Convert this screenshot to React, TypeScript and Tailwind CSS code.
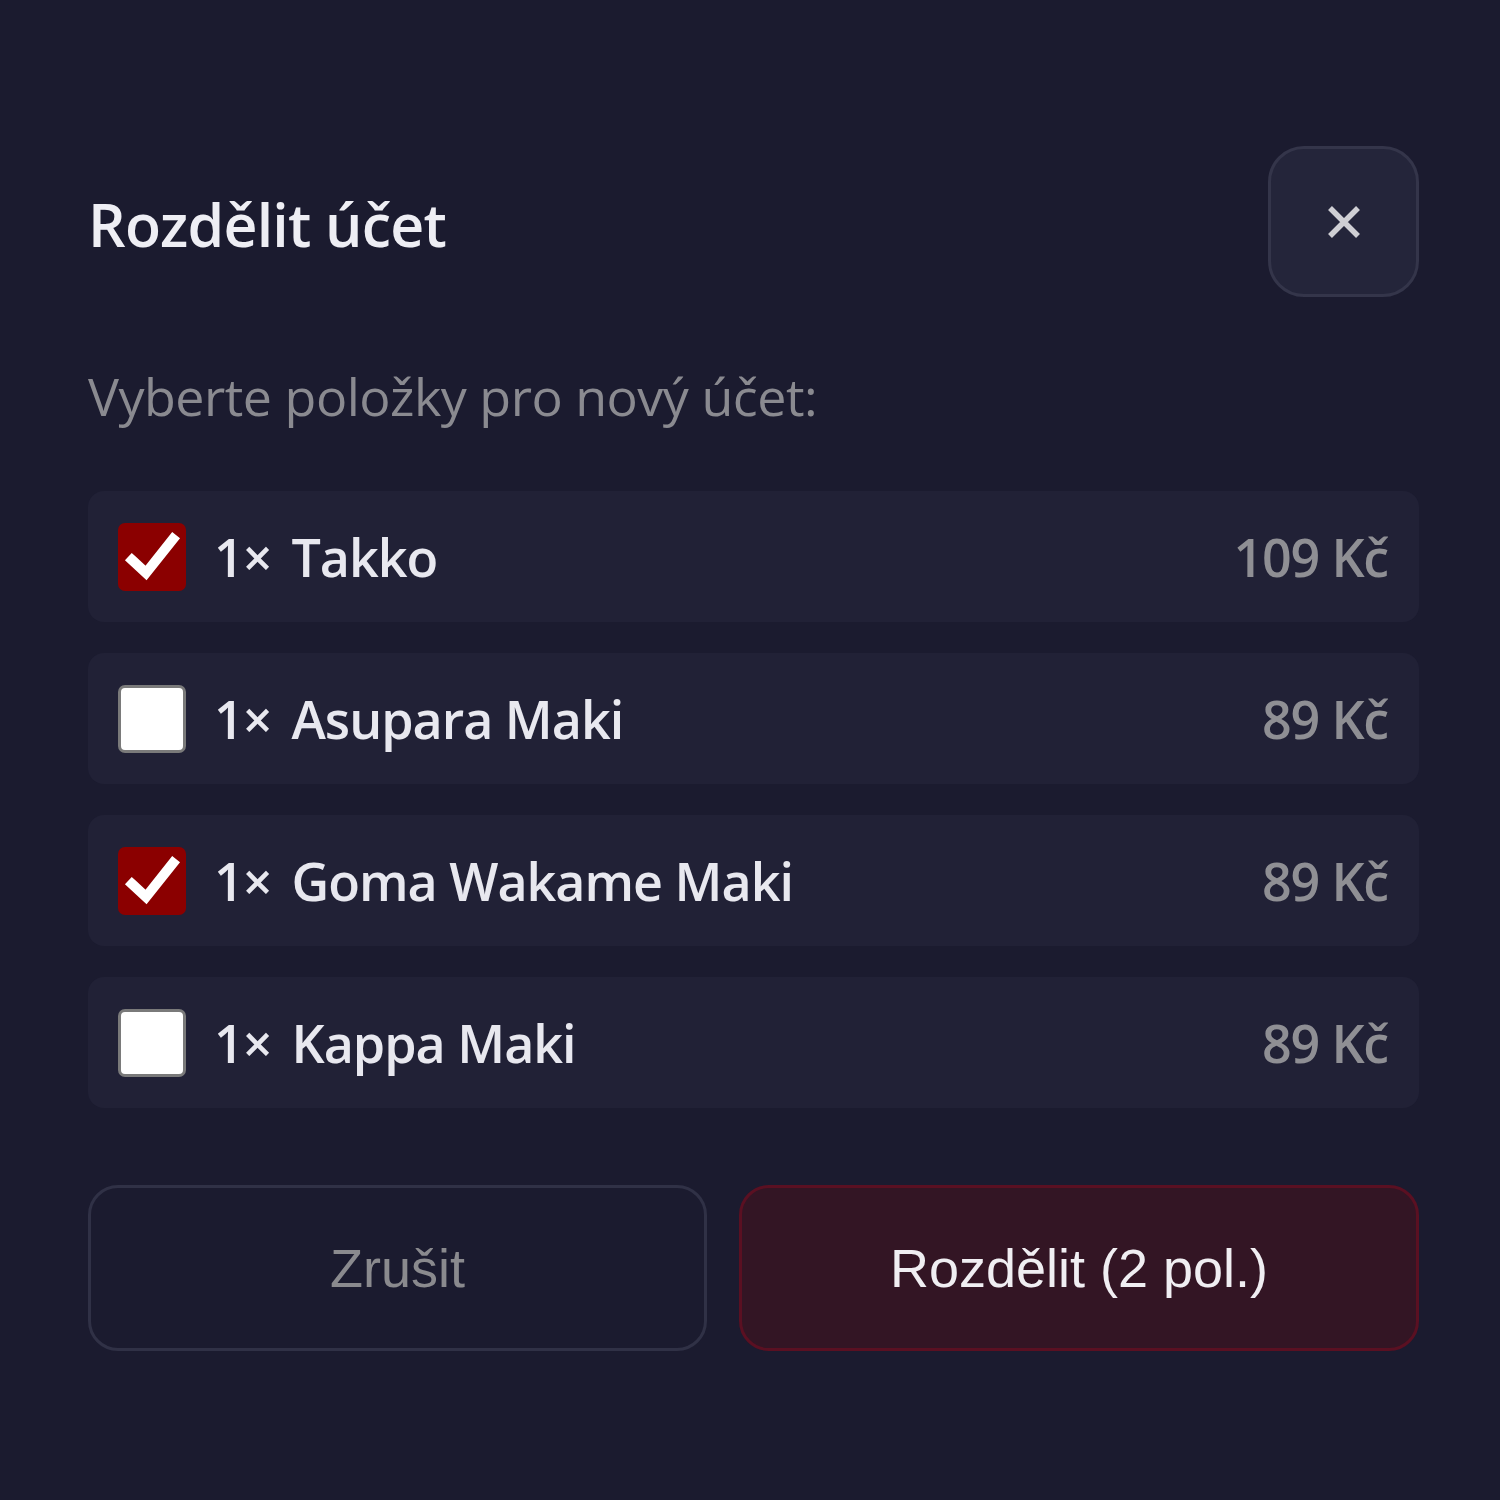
import { useState } from 'react';

type Polozka = { id: number; nazev: string; cena: number };

const polozky: Polozka[] = [
  { id: 1, nazev: 'Takko', cena: 109 },
  { id: 2, nazev: 'Asupara Maki', cena: 89 },
  { id: 3, nazev: 'Goma Wakame Maki', cena: 89 },
  { id: 4, nazev: 'Kappa Maki', cena: 89 },
];

function Checkbox({ checked }: { checked: boolean }) {
  if (checked) {
    return (
      <span className="flex h-[68px] w-[68px] shrink-0 items-center justify-center rounded-[7px] bg-[#8b0000]">
        <svg viewBox="0 0 68 68" className="h-[68px] w-[68px]" fill="none">
          <path d="M14 37 L28 50 L55 16" stroke="#ffffff" strokeWidth="10" strokeLinecap="square" strokeLinejoin="miter" />
        </svg>
      </span>
    );
  }
  return <span className="block h-[68px] w-[68px] shrink-0 rounded-[7px] border-[3px] border-[#7a7a7a] bg-white" />;
}

export default function App() {
  const [vybrane, setVybrane] = useState<number[]>([1, 3]);
  const toggle = (id: number) =>
    setVybrane((v) => (v.includes(id) ? v.filter((x) => x !== id) : [...v, id]));

  return (
    <div className="min-h-[1500px] w-[1500px] bg-[#1b1b2f] pl-[88px] pr-[81px] pt-[146px] font-['Open_Sans','Noto_Sans',sans-serif]">
      {/* Header */}
      <div className="flex items-center justify-between">
        <h2 className="mt-[6px] text-[59px] font-semibold leading-none text-[#eeeef4] tracking-[-0.8px]">Rozdělit účet</h2>
        <button className="flex h-[151px] w-[151px] items-center justify-center rounded-[36px] border-[3px] border-[#34354a] bg-[#24253a]">
          <svg viewBox="0 0 40 40" className="h-[40px] w-[40px]" fill="none">
            <path d="M6 6 L34 34 M34 6 L6 34" stroke="#cfcfd4" strokeWidth="5.5" />
          </svg>
        </button>
      </div>

      <p className="mt-[63px] text-[52px] leading-[72px] text-[#8a8a90] tracking-[-0.5px]">Vyberte položky pro nový účet:</p>

      {/* Položky */}
      <ul className="mt-[59px] flex flex-col gap-[31px]">
        {polozky.map((p) => {
          const checked = vybrane.includes(p.id);
          return (
            <li
              key={p.id}
              onClick={() => toggle(p.id)}
              className="flex h-[131px] cursor-pointer items-center rounded-[16px] bg-[#212136] pl-[30px] pr-[31px]"
            >
              <Checkbox checked={checked} />
              <span className="ml-[28px] flex-1 text-[52px] font-semibold leading-none text-[#e8e8ef] tracking-[-1px]">
                1×<span className="ml-[20px]">{p.nazev}</span>
              </span>
              <span className="text-[52px] font-semibold leading-none text-[#8f8f94] tracking-[-1.2px]">{p.cena} Kč</span>
            </li>
          );
        })}
      </ul>

      {/* Akce */}
      <div className="mt-[77px] grid grid-cols-[619px_1fr] gap-[32px]">
        <button className="h-[166px] rounded-[30px] border-[3px] border-[#303146] bg-transparent font-['Liberation_Sans',Arial,sans-serif] text-[54px] text-[#8a8a8e]">
          Zrušit
        </button>
        <button className="h-[166px] rounded-[30px] border-[3px] border-[#5a1022] bg-[#331524] font-['Liberation_Sans',Arial,sans-serif] text-[54px] text-[#f0eef2]">
          Rozdělit ({vybrane.length} pol.)
        </button>
      </div>
    </div>
  );
}
